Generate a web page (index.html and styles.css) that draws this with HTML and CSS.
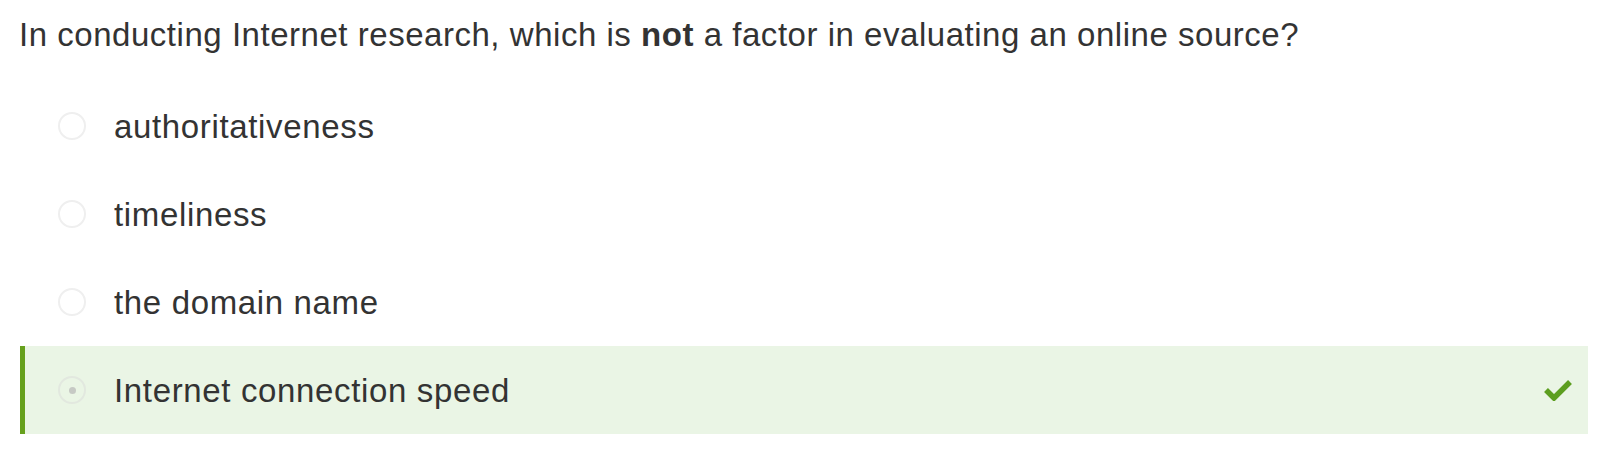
FILE: index.html
```html
<!DOCTYPE html>
<html>
<head>
<meta charset="utf-8">
<link rel="stylesheet" href="styles.css">
</head>
<body>
<div class="quiz">
  <p class="question">In conducting Internet research, which is <strong>not</strong> a factor in evaluating an online source?</p>
  <ul class="options">
    <li class="option"><span class="radio"></span><span class="label">authoritativeness</span></li>
    <li class="option"><span class="radio"></span><span class="label">timeliness</span></li>
    <li class="option"><span class="radio"></span><span class="label">the domain name</span></li>
    <li class="option correct"><span class="radio checked"></span><span class="label">Internet connection speed</span>
      <svg class="check" width="28" height="22" viewBox="0 0 28 22"><path d="M2 11 L10 19 L26 3" fill="none" stroke="#5c9e1f" stroke-width="5.5" stroke-linejoin="miter"/></svg>
    </li>
  </ul>
</div>
</body>
</html>
```
FILE: styles.css
```css
html, body {
  margin: 0;
  padding: 0;
  background: #ffffff;
}
body {
  font-family: "Liberation Sans", Arial, Helvetica, sans-serif;
  color: #333333;
}
.quiz {
  padding: 16px 16px 0 19px;
}
.question {
  margin: 0;
  font-size: 33px;
  line-height: 38px;
  letter-spacing: 0.53px;
}
.question strong {
  font-weight: bold;
}
.options {
  list-style: none;
  margin: 28px 0 0 1px;
  padding: 0;
}
.option {
  display: flex;
  align-items: center;
  height: 88px;
  border-left: 5px solid transparent;
  box-sizing: border-box;
}
.option.correct {
  background: #eaf5e5;
  border-left-color: #66a01d;
}
.radio {
  width: 28px;
  height: 28px;
  box-sizing: border-box;
  border: 2px solid #efefef;
  border-radius: 50%;
  margin-left: 33px;
  margin-right: 28px;
  flex: none;
  display: flex;
  align-items: center;
  justify-content: center;
  background: transparent;
}
.option.correct .radio {
  border-color: #e2e8df;
}
.radio.checked::after {
  content: "";
  width: 7px;
  height: 7px;
  border-radius: 50%;
  background: #c6c9c4;
}
.label {
  font-size: 33px;
  letter-spacing: 0.65px;
  color: #333333;
  position: relative;
  top: 1px;
}
.check {
  margin-left: auto;
  margin-right: 16px;
  flex: none;
}
```
